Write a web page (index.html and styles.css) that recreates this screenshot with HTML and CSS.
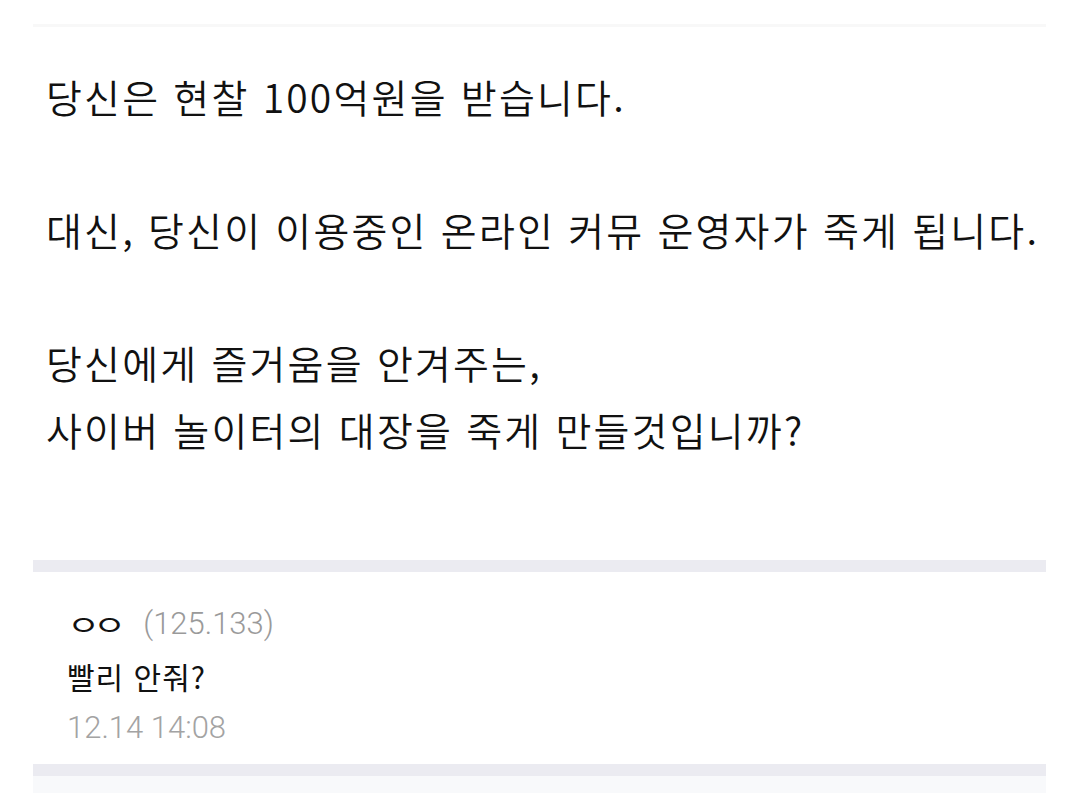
FILE: index.html
```html
<!DOCTYPE html>
<html lang="ko">
<head>
  <meta charset="UTF-8" />
  <meta name="viewport" content="width=device-width, initial-scale=1.0"/>
  <title>게시글</title>
  <link rel="stylesheet" href="styles.css">
</head>
<body>
  <div class="page">
    <div class="top-line"></div>

    <div class="post">
      <p>당신은 현찰 100억원을 받습니다.</p>
      <p>대신, 당신이 이용중인 온라인 커뮤 운영자가 죽게 됩니다.</p>
      <p>당신에게 즐거움을 안겨주는,<br>사이버 놀이터의 대장을 죽게 만들것입니까?</p>
    </div>

    <div class="divider"></div>

    <div class="comment">
      <div class="comment-head">
        <span class="nick">ㅇㅇ</span>
        <span class="ip">(125.133)</span>
      </div>
      <div class="comment-body">빨리 안줘?</div>
      <div class="comment-date">12.14 14:08</div>
    </div>

    <div class="divider"></div>
    <div class="next-row"></div>
  </div>
</body>
</html>
```

FILE: styles.css
```css
* {
  box-sizing: border-box;
}

body {
  margin: 0;
  padding: 0;
  background: #fff;
  font-family: "Noto Sans CJK KR", "Noto Sans", sans-serif;
  color: #111;
}

.page {
  padding: 0 34px 0 33px;
}

.top-line {
  height: 3px;
  margin-top: 24px;
  background: #f8f8f8;
}

.post {
  padding: 36px 13px 0;
  font-size: 39px;
  font-weight: 350;
  line-height: 67px;
  letter-spacing: 2.2px;
  white-space: nowrap;
}

.post p {
  margin: 0 0 66px;
}

.post p:last-child {
  margin-bottom: 97px;
}

.divider {
  height: 12px;
  background: #ebebf1;
}

.comment {
  padding: 30px 34px 16px;
}

.comment-head {
  display: flex;
  align-items: center;
  gap: 24px;
  height: 44px;
}

.nick {
  display: inline-block;
  font-size: 36px;
  line-height: 44px;
  letter-spacing: -7px;
  transform: scaleY(0.78);
}

.ip {
  font-family: Roboto, "Noto Sans CJK KR", sans-serif;
  font-weight: 300;
  font-size: 31px;
  line-height: 44px;
  color: #9a9a9a;
}

.comment-body {
  margin-top: 8px;
  font-size: 30px;
  font-weight: 400;
  line-height: 44px;
  letter-spacing: 1px;
}

.comment-date {
  margin-top: 10px;
  font-family: Roboto, "Noto Sans CJK KR", sans-serif;
  font-weight: 300;
  font-size: 31px;
  line-height: 40px;
  color: #a3a3a3;
}

.next-row {
  height: 17px;
  background: #f8f9fb;
}
```
